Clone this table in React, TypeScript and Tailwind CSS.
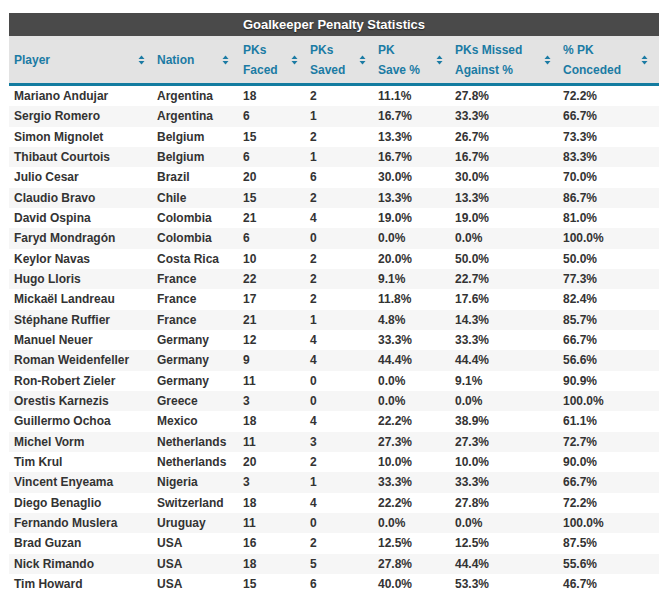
const rows: [string, string, number, number, string, string, string][] = [
  ['Mariano Andujar', 'Argentina', 18, 2, '11.1%', '27.8%', '72.2%'],
  ['Sergio Romero', 'Argentina', 6, 1, '16.7%', '33.3%', '66.7%'],
  ['Simon Mignolet', 'Belgium', 15, 2, '13.3%', '26.7%', '73.3%'],
  ['Thibaut Courtois', 'Belgium', 6, 1, '16.7%', '16.7%', '83.3%'],
  ['Julio Cesar', 'Brazil', 20, 6, '30.0%', '30.0%', '70.0%'],
  ['Claudio Bravo', 'Chile', 15, 2, '13.3%', '13.3%', '86.7%'],
  ['David Ospina', 'Colombia', 21, 4, '19.0%', '19.0%', '81.0%'],
  ['Faryd Mondragón', 'Colombia', 6, 0, '0.0%', '0.0%', '100.0%'],
  ['Keylor Navas', 'Costa Rica', 10, 2, '20.0%', '50.0%', '50.0%'],
  ['Hugo Lloris', 'France', 22, 2, '9.1%', '22.7%', '77.3%'],
  ['Mickaël Landreau', 'France', 17, 2, '11.8%', '17.6%', '82.4%'],
  ['Stéphane Ruffier', 'France', 21, 1, '4.8%', '14.3%', '85.7%'],
  ['Manuel Neuer', 'Germany', 12, 4, '33.3%', '33.3%', '66.7%'],
  ['Roman Weidenfeller', 'Germany', 9, 4, '44.4%', '44.4%', '56.6%'],
  ['Ron-Robert Zieler', 'Germany', 11, 0, '0.0%', '9.1%', '90.9%'],
  ['Orestis Karnezis', 'Greece', 3, 0, '0.0%', '0.0%', '100.0%'],
  ['Guillermo Ochoa', 'Mexico', 18, 4, '22.2%', '38.9%', '61.1%'],
  ['Michel Vorm', 'Netherlands', 11, 3, '27.3%', '27.3%', '72.7%'],
  ['Tim Krul', 'Netherlands', 20, 2, '10.0%', '10.0%', '90.0%'],
  ['Vincent Enyeama', 'Nigeria', 3, 1, '33.3%', '33.3%', '66.7%'],
  ['Diego Benaglio', 'Switzerland', 18, 4, '22.2%', '27.8%', '72.2%'],
  ['Fernando Muslera', 'Uruguay', 11, 0, '0.0%', '0.0%', '100.0%'],
  ['Brad Guzan', 'USA', 16, 2, '12.5%', '12.5%', '87.5%'],
  ['Nick Rimando', 'USA', 18, 5, '27.8%', '44.4%', '55.6%'],
  ['Tim Howard', 'USA', 15, 6, '40.0%', '53.3%', '46.7%'],
];

const columns = [
  { lines: ['Player'], width: 'w-[143px]', pad: 'pr-[7px]' },
  { lines: ['Nation'], width: 'w-[86px]', pad: 'pr-[9px]' },
  { lines: ['PKs', 'Faced'], width: 'w-[67px]', pad: 'pr-[7px]' },
  { lines: ['PKs', 'Saved'], width: 'w-[68px]', pad: 'pr-[7px]' },
  { lines: ['PK', 'Save %'], width: 'w-[77px]', pad: 'pr-[7px]' },
  { lines: ['PKs Missed', 'Against %'], width: 'w-[108px]', pad: 'pr-[7px]' },
  { lines: ['% PK', 'Conceded'], width: 'w-[101px]', pad: 'pr-[11px]' },
];

function SortIcon() {
  return (
    <svg width="7" height="10" viewBox="0 0 7 10" className="shrink-0">
      <path d="M3.5 0.5 L6.5 4 L0.5 4 Z" fill="#1b7ba4" />
      <path d="M3.5 9.5 L6.5 6 L0.5 6 Z" fill="#1b7ba4" />
    </svg>
  );
}

export default function App() {
  return (
    <div className="bg-white w-[669px] h-[601px] pt-[13px] pl-[9px]" style={{ fontFamily: '"Liberation Sans", Arial, sans-serif' }}>
      <div className="w-[650px]">
        <div className="h-[23px] bg-[#4a4a4a] flex items-center justify-center text-white font-bold text-[13px] [text-shadow:0_1px_1px_rgba(0,0,0,0.5)]">
          Goalkeeper Penalty Statistics
        </div>
        <div className="flex h-[50px] bg-[#e3e3e3] border-b-[3px] border-[#137ca0]">
          {columns.map((c, i) => (
            <div key={i} className={`${c.width} ${c.pad} pl-[5px] flex items-center justify-between`}>
              <div className="text-[12px] font-bold text-[#1b7ba4] leading-[20px]">
                {c.lines.map((l) => (
                  <div key={l}>{l}</div>
                ))}
              </div>
              <SortIcon />
            </div>
          ))}
        </div>
        <div>
          {rows.map((r, i) => (
            <div key={r[0]} className={`flex h-[20.33px] items-center text-[12px] font-bold text-[#333333] ${i % 2 === 1 ? 'bg-[#f6f6f6]' : 'bg-white'}`}>
              {r.map((v, j) => (
                <div key={j} className={`${columns[j].width} pl-[5px] whitespace-nowrap`}>
                  {v}
                </div>
              ))}
            </div>
          ))}
        </div>
      </div>
    </div>
  );
}
